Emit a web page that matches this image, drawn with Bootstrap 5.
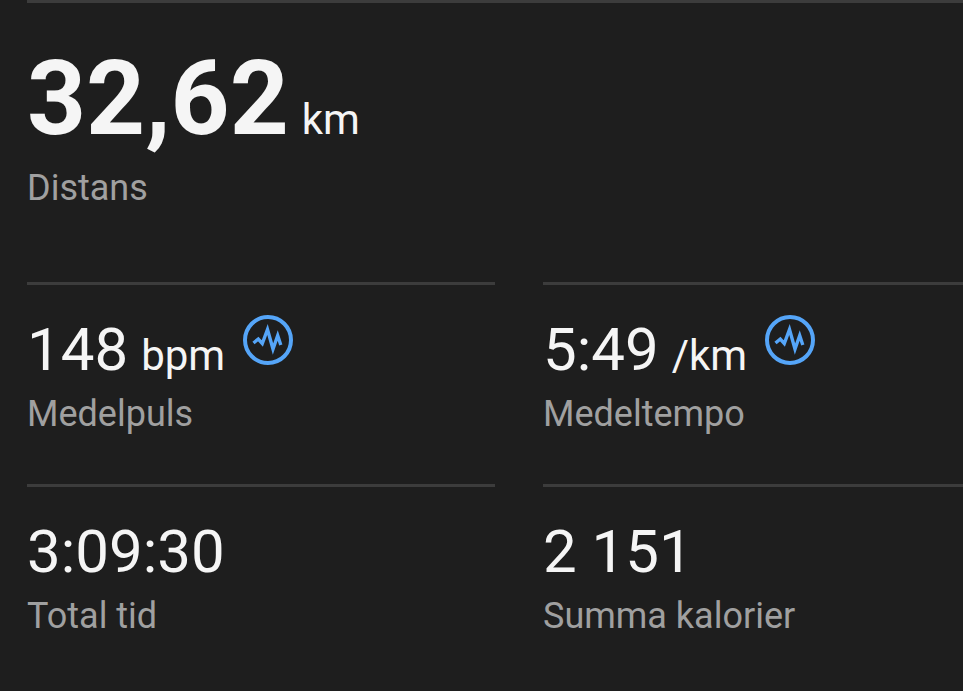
<!DOCTYPE html>
<html lang="sv">
<head>
<meta charset="utf-8">
<meta name="viewport" content="width=device-width, initial-scale=1">
<title>Träningspass</title>
<link href="https://cdn.jsdelivr.net/npm/bootstrap@5.3.0/dist/css/bootstrap.min.css" rel="stylesheet">
<style>
body{background:#1e1e1e;color:#f5f5f5;font-family:Roboto,sans-serif}
.stats{padding-left:27px}
.stat-grid{display:grid;grid-template-columns:468fr 420fr;column-gap:48px}
.stat{border-top:3px solid #3c3c3c;padding-top:29px;padding-bottom:48px}
.stat-main{border-top:3px solid #3c3c3c;padding-top:35px;padding-bottom:72px}
.value{font-size:60px;line-height:72px}
.value-main{font-size:103px;line-height:122px;font-weight:700}
.unit{font-size:42px;line-height:1;font-weight:400;margin-left:13px}
.caption{font-size:36px;line-height:44px;margin-top:6px;color:#a0a0a0}
.pulse-btn{width:50px;height:50px;margin-left:18px;margin-top:1px}
.pulse-btn svg{fill:none;stroke:#55a5f8}
</style>
</head>
<body>
<main class="stats">
<section class="stat-main">
<div class="value-main">32,62<span class="unit">km</span></div>
<div class="caption">Distans</div>
</section>
<div class="stat-grid">
<section class="stat">
<div class="d-flex align-items-start"><div class="value">148<span class="unit">bpm</span></div>
<button type="button" class="btn p-0 border-0 d-flex pulse-btn" aria-label="Visa pulsdiagram"><svg width="50" height="50" viewBox="0 0 50 50"><circle cx="25" cy="25" r="23" stroke-width="4"/><path stroke-width="3.4" d="M10.5 28L15.3 24L19.3 28.5L24.5 14.5L30 34L34.7 20.5L37.8 30"/></svg></button></div>
<div class="caption">Medelpuls</div>
</section>
<section class="stat">
<div class="d-flex align-items-start"><div class="value">5:49<span class="unit">/km</span></div>
<button type="button" class="btn p-0 border-0 d-flex pulse-btn" aria-label="Visa tempodiagram"><svg width="50" height="50" viewBox="0 0 50 50"><circle cx="25" cy="25" r="23" stroke-width="4"/><path stroke-width="3.4" d="M10.5 28L15.3 24L19.3 28.5L24.5 14.5L30 34L34.7 20.5L37.8 30"/></svg></button></div>
<div class="caption">Medeltempo</div>
</section>
<section class="stat"><div class="value">3:09:30</div><div class="caption">Total tid</div></section>
<section class="stat"><div class="value">2 151</div><div class="caption">Summa kalorier</div></section>
</div>
</main>
<script src="https://cdn.jsdelivr.net/npm/bootstrap@5.3.0/dist/js/bootstrap.bundle.min.js"></script>
</body>
</html>
